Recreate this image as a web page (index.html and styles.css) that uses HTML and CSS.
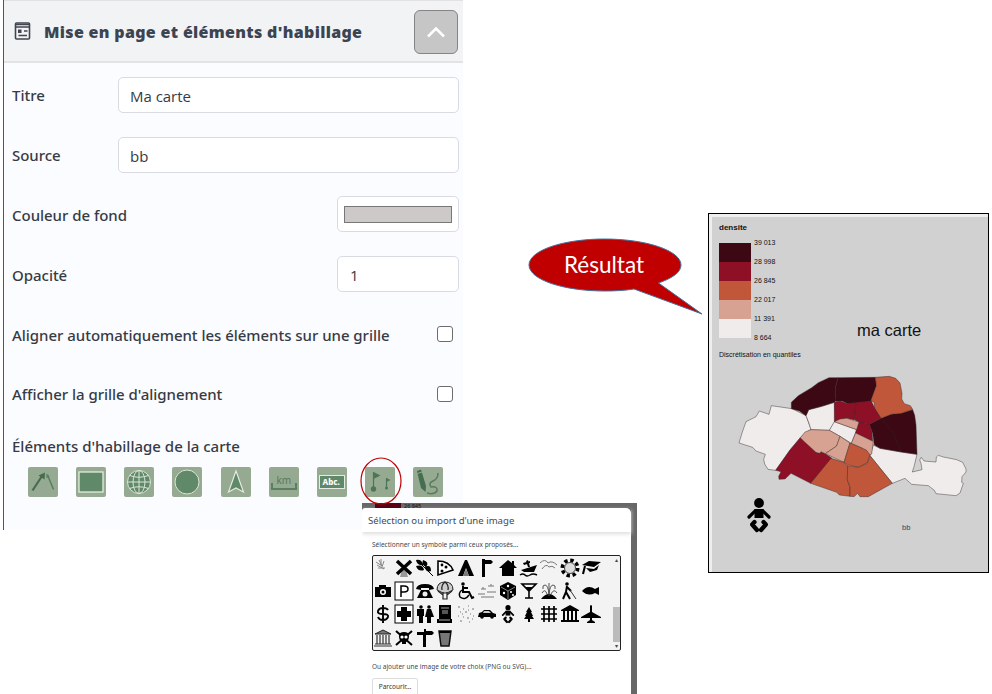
FILE: index.html
```html
<!DOCTYPE html>
<html lang="fr">
<head>
<meta charset="utf-8">
<title>Mise en page et éléments d'habillage</title>
<link rel="stylesheet" href="styles.css">
</head>
<body>
<main class="stage">
  <section class="panel">
    <header class="panel-head">
      <svg class="head-icon" viewBox="0 0 16 18"><rect x="1" y="1" width="14" height="16" rx="1" fill="none" stroke="#41454f" stroke-width="1.6"/><path d="M1 2.5H15M1 5H15M9.5 9H13M4 13.5H12.5" stroke="#41454f" stroke-width="1.5"/><rect x="3.5" y="7.5" width="3.5" height="3.5" fill="#41454f"/></svg>
      <h1>Mise en page et éléments d'habillage</h1>
      <button class="toggle" aria-label="Replier"><svg viewBox="0 0 20 12"><path d="M2 10.500L10 2.500L18 10.500" fill="none" stroke="#fff" stroke-width="2.600"/></svg></button>
    </header>
    <div class="fields">
      <label class="row"><span>Titre</span><span class="box wide">Ma carte</span></label>
      <label class="row"><span>Source</span><span class="box wide">bb</span></label>
      <label class="row"><span>Couleur de fond</span><span class="box color"><i></i></span></label>
      <label class="row"><span>Opacité</span><span class="box">1</span></label>
      <label class="row"><span>Aligner automatiquement les éléments sur une grille</span><span class="check"></span></label>
      <label class="row"><span>Afficher la grille d'alignement</span><span class="check"></span></label>
    </div>
    <h2>Éléments d'habillage de la carte</h2>
    <div class="tools">
      <svg viewBox="0 0 30 30"><path d="M4.500 23.500L14 9" stroke="#466b51" stroke-width="2.200"/><path d="M17 5.500L16.500 12.500L10.500 8.500Z" fill="#466b51"/><path d="M19.500 8L25.500 22.500" stroke="#587c60" stroke-width="1.500"/><path d="M18.500 6.500L21.500 9.500L18.500 11Z" fill="#587c60"/></svg>
      <svg viewBox="0 0 30 30"><rect x="3" y="5" width="24" height="20" fill="#5f8968" stroke="#e4ebe1" stroke-width="1.300"/></svg>
      <svg viewBox="0 0 30 30"><circle cx="15" cy="15" r="11.500" fill="#5f8968"/><g fill="none" stroke="#dbe5d8" stroke-width="1"><circle cx="15" cy="15" r="11.500"/><ellipse cx="15" cy="15" rx="6" ry="11.500"/><path d="M15 3.500V26.500M3.500 15H26.500M5.500 8.500Q15 12 24.500 8.500M5.500 21.500Q15 18 24.500 21.500"/></g></svg>
      <svg viewBox="0 0 30 30"><circle cx="15" cy="15" r="12" fill="#5f8968" stroke="#dbe5d8"/></svg>
      <svg viewBox="0 0 30 30"><path d="M15 4L22.500 25L15 21L7.500 25Z" fill="#5f8968" stroke="#e4ebe1" stroke-width="1.200"/></svg>
      <svg viewBox="0 0 30 30"><text x="7.500" y="17" class="km">km</text><path d="M3 16V22H27V16" fill="none" stroke="#5a8064" stroke-width="2"/></svg>
      <svg viewBox="0 0 30 30"><rect x="2.500" y="8.500" width="25" height="13" fill="#5f8968" stroke="#e4ebe1"/><text x="5.500" y="18" class="abc">Abc.</text></svg>
      <svg viewBox="0 0 30 30"><path d="M8.500 22V5M21.500 20V11" stroke="#4d7558" stroke-width="1.200"/><path d="M8.500 5L15.500 8.500L8.500 12ZM21.500 11L25.500 13L21.500 15Z" fill="#4d7558"/><circle cx="8.500" cy="22" r="2.700" fill="#4d7558"/><circle cx="21.500" cy="21" r="1.500" fill="#4d7558"/></svg>
      <svg viewBox="0 0 30 30"><path d="M4 4L8 2.500L13 19L12.500 25L8 21Z" fill="#456d51"/><path d="M4.500 6.500L9 5" stroke="#96aa91"/><path d="M25 6Q25 12 20 14T18 20Q25 19 24 24Q21 28 14 26" fill="none" stroke="#587c60" stroke-width="1.500"/></svg>
    </div>
  </section>

  <svg class="callout" viewBox="528 236 176 80"><path d="M634 289C625 290.500 615 291 604.500 291C563 291 529 279.500 529 265C529 250.500 563 239 604.500 239C646 239 681 250.500 681 265C681 272 673 278 658.500 283L702 314Z" fill="#c00000" stroke="#41719c" stroke-width="1"/><text x="564" y="273" textLength="80" lengthAdjust="spacingAndGlyphs">Résultat</text></svg>

  <section class="result">
    <div class="map-page">
      <h3>densite</h3>
      <div class="legend">
        <div class="ramp"><i class="c1"></i><i class="c2"></i><i class="c3"></i><i class="c4"></i><i class="c5"></i></div>
        <div class="values"><span>39 013</span><span>28 998</span><span>26 845</span><span>22 017</span><span>11 391</span><span>8 664</span></div>
      </div>
      <p class="method">Discrétisation en quantiles</p>
      <p class="map-title">ma carte</p>
      <svg class="map" viewBox="0 0 750 420">
        <g stroke="#302428" stroke-opacity=".65" stroke-width="2" stroke-linejoin="round">
          <g fill="#f0eceb">
            <path d="M27 234L36 204L48 170L78 155L88 138L117 148L124 122L186 131L228 152L243 193L225 205L211 218L180 255L137 316L114 313L104 297L101 283L106 268L78 258L68 247Z"/>
            <path d="M228 152L236 134L275 124L313 112L316 168L298 196L243 194L236 172Z"/>
            <path d="M313 170L380 194L364 235L330 214L298 196Z"/>
            <path d="M430 240L450 250L514 261L561 268L552 305L547 321L576 314L573 295L569 285L574 277L582 288L618 291L619 276L625 271L640 276L680 284L698 292L708 312L708 321L696 335L695 352L700 355L690 384L678 392L618 386L613 376L595 362L545 358L525 340L487 355L420 272Z"/>
          </g>
          <g fill="#3b0813">
            <path d="M184 131L184 112L205 92L245 68L265 53L297 38L324 38L316 68L318 107L313 112L275 124L236 134L228 152L208 138Z"/>
            <path d="M324 38L436 37L439 62L424 108L378 116L354 116L336 108L318 109L316 70Z"/>
            <path d="M453 160L484 148L514 145L548 134L554 151L558 180L561 268L514 261L450 250L433 240L428 205L418 178Z"/>
            <path d="M455 160L490 205L514 261" fill="none"/>
          </g>
          <path fill="#c0573a" d="M436 37L478 34L497 40L510 54L516 85L515 102L523 116L541 122L548 133L514 145L484 148L453 160L434 134L432 111L422 107L428 91L439 62Z"/>
          <g fill="#8d1027">
            <path d="M313 112L330 108L354 116L378 112L377 138L372 164L350 160L313 170Z"/>
            <path d="M378 112L424 108L434 130L453 160L418 178L386 172L372 163Z"/>
            <path d="M387 171L418 178L426 200L428 228L400 215L377 204L380 190Z"/>
            <path d="M211 218L225 232L258 262L268 265L273 260L286 266L306 280L300 290L242 355L183 325L165 342L147 343L146 334L153 320L137 316L180 255Z"/>
          </g>
          <g fill="#d8a292">
            <path d="M313 170L330 162L350 160L387 171L380 194Z"/>
            <path d="M377 204L400 215L430 230L425 267L418 271L398 250L364 235Z"/>
            <path d="M211 218L225 201L243 194L298 196L330 214L320 243L286 266L273 260L268 265L258 262L225 232Z"/>
            <path d="M330 214L360 234L342 292L286 266L320 243Z"/>
          </g>
          <g fill="#c0573a">
            <path d="M360 234L388 246L409 255L420 270L412 293L385 307L355 300L342 292Z"/>
            <path d="M303 280L342 292L353 302L352 345L360 366L360 394L328 390L320 382L242 355Z"/>
            <path d="M353 302L385 307L412 295L420 272L487 355L415 395L390 395L383 385L372 395L360 394L360 366L352 345Z"/>
          </g>
        </g>
      </svg>
      <div class="map-foot">
        <svg class="baby" viewBox="0 0 24 34"><use href="#baby-shape"/></svg>
        <span>bb</span>
      </div>
    </div>
  </section>
</main>

<svg class="ring" viewBox="0 0 42 48"><ellipse cx="21" cy="24" rx="20" ry="23" fill="none" stroke="#c00000" stroke-width="1.200"/></svg>

<section class="backdrop">
  <div class="behind"><i></i><span>26 845</span></div>
  <div class="dialog">
    <h2>Sélection ou import d'une image</h2>
    <div class="dialog-body">
      <p>Sélectionner un symbole parmi ceux proposés...</p>
      <div class="picker">
        <div class="symbols">
          <svg viewBox="0 0 18 18"><path d="M5 1L8 7M7 0V6M10 2L8 8M2 3L8 7M4 9H11M3 6L10 10" stroke="#888"/></svg>
          <svg viewBox="0 0 18 18"><path d="M7 11L5 18H13L11 11Z" fill="#999"/><path d="M2 2L16 15M16 2L2 15" stroke="#000" stroke-width="3.500"/></svg>
          <svg viewBox="0 0 18 18"><path d="M0 1Q6 0 7 6Q1 7 0 1M7 1Q14 3 10 8Q5 6 7 1M0 7Q7 5 8 11Q2 13 0 7M9 8Q15 5 15 12Q10 14 9 8"/><path d="M5 5L17 17" stroke="#000"/></svg>
          <svg viewBox="0 0 18 18"><path d="M2 2Q13 2 17 11L2 16Z" fill="#fff" stroke="#000" stroke-width="1.600"/><circle cx="6" cy="6" r="1.400"/><circle cx="10" cy="8" r="1.500"/><circle cx="6" cy="12" r="1.500"/></svg>
          <svg viewBox="0 0 18 18"><path d="M8 1H10L17 17H12L9 9L6 17H1Z"/><path d="M9 10L12 17H6Z" fill="#777"/></svg>
          <svg viewBox="0 0 18 18"><path d="M4 0H7V1H13L15 3L13 5H7V18H4Z"/></svg>
          <svg viewBox="0 0 18 18"><path d="M9 1L13 4V2H15V6L18 9H15V17H3V9H0Z"/></svg>
          <svg viewBox="0 0 18 18"><path d="M1 11L17 6L14 13H4ZM6 2L8 1L10 8H8ZM3 4L10 2V4L4 6Z"/><path d="M0 16Q3 14 5 16T10 16T17 16" fill="none" stroke="#000" stroke-width="1.500"/></svg>
          <svg viewBox="0 0 18 18" fill="none" stroke="#777"><path d="M0 4Q5 -1 8 4Q12 1 17 6M2 10Q6 4 9 8Q12 6 15 9"/></svg>
          <svg viewBox="0 0 18 18"><circle cx="9" cy="9" r="7.700" fill="none" stroke="#000" stroke-width="3.600" stroke-dasharray="3.400 2.648"/><circle cx="9" cy="9" r="5.500" fill="#ddd" stroke="#444"/></svg>
          <svg viewBox="0 0 18 18"><path d="M0 6L7 2L19 3L12 8ZM4 9L12 10L17 6L15 11L8 13Z"/><path d="M3 7L1 15" stroke="#000" stroke-width="2"/></svg>

          <svg viewBox="0 0 18 18"><path d="M1 5H5V3H12V5H17V15H1Z"/><circle cx="9" cy="10" r="3" fill="#fff"/><circle cx="9" cy="10" r="1.500"/></svg>
          <svg viewBox="0 0 18 18"><rect x="0" y="0" width="18" height="18" fill="#fff" stroke="#000"/><path d="M6 15V4H9Q13 4 13 7T9 10H6" fill="none" stroke="#000" stroke-width="1.500"/></svg>
          <svg viewBox="0 0 18 18"><path d="M0 7Q1 2 9 2T18 7L13 8V6H5V8ZM5 8H13L17 16H1Z"/><circle cx="9" cy="12" r="2.500" fill="#eee"/></svg>
          <svg viewBox="0 0 18 18"><path d="M1 8Q1 0 9 0T17 8L11 11H7Z" fill="#ccc" stroke="#222"/><path d="M6 8Q5 3 9 0Q13 3 12 8M7 10V17H11V10M2 9L7 13M16 9L11 13" fill="none" stroke="#222" stroke-width="1.200"/></svg>
          <svg viewBox="0 0 18 18"><circle cx="6" cy="2" r="1.800"/><path d="M6 4V10H12L15 16L17 15M6 6H11" fill="none" stroke="#000" stroke-width="2"/><path d="M5 8Q1 11 3 15Q8 19 12 13" fill="none" stroke="#000" stroke-width="1.500"/></svg>
          <svg viewBox="0 0 18 18" stroke="#777"><path d="M3 7H8M10 4H16M0 12H7M9 10H18M3 15H16M5 5V7M13 2V4"/></svg>
          <svg viewBox="0 0 18 18"><path d="M9 0L17 4V13L9 18L1 13V4Z"/><path d="M2 5L9 9L16 5M9 9V17" fill="none" stroke="#bbb" stroke-width=".7"/><g fill="#fff"><circle cx="9" cy="4" r="1.200"/><circle cx="5" cy="11" r="1.200"/><circle cx="12" cy="10" r="1"/><circle cx="14" cy="13" r="1"/></g></svg>
          <svg viewBox="0 0 18 18"><path d="M2 2H16L9 9ZM9 9V16M5 16H13" fill="none" stroke="#000" stroke-width="1.600"/><path d="M5 5H13L9 9Z"/></svg>
          <svg viewBox="0 0 18 18"><path d="M1 17Q5 12 9 12T17 17Z"/><path d="M9 14V1M9 12Q8 3 5 3T3 7M9 12Q10 3 13 3T15 7M7 12Q5 6 2 11M11 12Q14 6 17 11" fill="none" stroke="#555"/></svg>
          <svg viewBox="0 0 18 18"><circle cx="6" cy="2" r="1.800"/><path d="M6 4L5 10L2 17M5 10L9 17M6 5L10 9" fill="none" stroke="#000" stroke-width="2"/><path d="M9 8L15 17" stroke="#333"/></svg>
          <svg viewBox="0 0 18 18"><path d="M0 9Q6 2 13 7L17 5V13L13 11Q6 15 0 9"/></svg>

          <svg viewBox="0 0 18 18"><path d="M14 5Q13 3 9 3T4 6T9 9T14 12T9 15T4 12M9 0V18" fill="none" stroke="#000" stroke-width="1.900"/></svg>
          <svg viewBox="0 0 18 18"><rect x="0" y="0" width="18" height="18" fill="#fff" stroke="#000"/><path d="M6 2H12V6H16V12H12V16H6V12H2V6H6Z"/></svg>
          <svg viewBox="0 0 18 18"><circle cx="5" cy="2" r="1.800"/><circle cx="13" cy="2" r="1.800"/><path d="M1 4H8V11H7V18H3V11H1ZM11 4H15L18 12H15V18H11V12H9Z"/></svg>
          <svg viewBox="0 0 18 18"><path d="M3 0H15V14H16V18H1V14H3Z"/><path d="M5 3H13M6 6H12M6 8H12M3 15H14" stroke="#aaa"/></svg>
          <svg viewBox="0 0 18 18"><path d="M1 2h2M6 4h1M11 1h1M15 4h2M3 7h1M8 7h2M13 9h1M1 11h1M6 12h1M10 13h2M15 14h1M3 16h2M12 17h1M5 9h1M11 5h1M16 11h1" stroke="#777"/></svg>
          <svg viewBox="0 0 18 18"><path d="M1 8L4 7L6 5H12L15 8L18 9V12H0Z"/><path d="M6 6H11L13 8H5Z" fill="#ccc"/><circle cx="4" cy="12" r="1.800"/><circle cx="14" cy="12" r="1.800"/></svg>
          <svg viewBox="0 0 24 34"><g id="baby-shape"><circle cx="12" cy="5" r="4.900"/><path d="M2 19L8.500 12.500H15.500L22 19" fill="none" stroke="#000" stroke-width="3.200" stroke-linecap="round"/><path d="M7.500 11H16.500V20H7.500Z"/><path d="M7.500 24L5.200 26.500L10 32M16.500 24L18.800 26.500L14 32" fill="none" stroke="#000" stroke-width="4.300" stroke-linecap="round" stroke-linejoin="round"/></g></svg>
          <svg viewBox="0 0 18 18"><path d="M9 2L12 7H11L13 11H12L14 14H10V17H8V14H4L6 11H5L7 7H6Z"/></svg>
          <svg viewBox="0 0 18 18"><path d="M4 1V17M9 1V17M14 1V17M1 4H17M1 9H17M1 14H17" stroke="#000" stroke-width="1.700"/></svg>
          <svg viewBox="0 0 18 18"><path d="M9 0L18 5V6H0V5ZM0 15H18V17H0Z"/><path d="M3 6V15M7 6V15M11 6V15M15 6V15" stroke="#000" stroke-width="2"/></svg>
          <svg viewBox="0 0 18 18"><path d="M8 1Q9-1 10 1V7L19 12V13H10V15L13 17V18H5V17L8 15V13H-1V12L8 7Z"/></svg>

          <svg viewBox="0 0 18 18"><path d="M9 1L17 5H1Z" fill="#777" stroke="#222"/><path d="M3 6V15M6 6V15M9 6V15M12 6V15M15 6V15M1 15H17M0 17H18" stroke="#333" stroke-width="1.200"/></svg>
          <svg viewBox="0 0 18 18"><path d="M1 2L17 16M17 2L1 16" stroke="#000" stroke-width="2"/><path d="M4 7Q4 3 9 3T14 7Q14 12 11 13V15H7V13Q4 12 4 7"/><circle cx="7" cy="8" r="1.600" fill="#fff"/><circle cx="11" cy="8" r="1.600" fill="#fff"/></svg>
          <svg viewBox="0 0 18 18"><path d="M8 0H10V2H16L18 4L16 6H10V18H7V6H1V3H8Z"/></svg>
          <svg viewBox="0 0 18 18"><path d="M3 2H15L13 17H5Z" fill="#777" stroke="#111" stroke-width="1.500"/><path d="M3 3H15" stroke="#000" stroke-width="2"/></svg>
        </div>
        <div class="scroll"><b>▴</b><i></i><b>▾</b></div>
      </div>
      <p>Ou ajouter une image de votre choix (PNG ou SVG)...</p>
      <button class="browse">Parcourir...</button>
    </div>
  </div>
</section>
</body>
</html>
```
FILE: styles.css
```css
* { box-sizing: border-box; }
body { margin: 0; width: 992px; height: 694px; overflow: hidden; background: #fff; font-family: "Noto Sans", sans-serif; position: relative; }
h1, h2, h3, p { margin: 0; }
svg { display: block; overflow: visible; }
.stage { display: flex; align-items: flex-start; padding-left: 3px; }

.panel { width: 460px; height: 530px; flex: none; border-left: 1px solid #555; background: #fbfcff; color: #363b44; }
.panel-head { display: flex; align-items: center; height: 63px; padding: 1px 5px 0 10px; background: #f2f3f4; border-top: 1px solid #e2e2e3; border-bottom: 2px solid #e3e3e4; }
.head-icon { width: 17px; height: 18px; margin-top: -2px; }
.panel-head h1 { margin-left: 13px; font-size: 16px; font-weight: 900; letter-spacing: .32px; color: #3c4452; white-space: nowrap; }
.toggle { display: grid; place-items: center; width: 44px; height: 44px; margin-left: auto; padding: 0; border: 1px solid #858585; border-radius: 6px; background: #c6c6c6; }
.toggle svg { width: 20px; height: 12px; }
.fields { padding: 2px 4px 0 8px; }
.row { display: flex; align-items: center; justify-content: space-between; height: 59.8px; font-size: 15px; font-weight: 500; letter-spacing: -.03px; white-space: nowrap; }
.row > span:first-child { padding-top: 1px; }
.box { width: 122px; height: 36px; padding: 1px 12px 0; border: 1px solid #d9dbe3; border-radius: 5px; background: #fff; line-height: 35px; font-family: "Open Sans", sans-serif; font-weight: 400; }
.wide { width: 341px; padding-left: 11px; }
.color { padding: 9px 6px; }
.color i { display: block; height: 17px; border: 1px solid #777; background: #cec9c9; }
.check { width: 16px; height: 16px; margin-right: 6px; border: 1.5px solid #6d6d70; border-radius: 3px; background: #fff; }
.panel h2 { margin: 10px 0 0 8px; font-size: 15px; line-height: 24px; font-weight: 500; }
.tools { display: flex; justify-content: space-between; margin: 9px 20px 0 24px; }
.tools svg { width: 30px; height: 30px; background: #96aa91; border-radius: 2px; }
.km { font: 10px "Noto Sans", sans-serif; fill: #55795f; }
.abc { font: 800 8px "Noto Sans", sans-serif; fill: #fff; }

.callout { flex: none; width: 176px; height: 80px; margin: 236px 0 0 65px; }
.callout text { font: 24px Lato, sans-serif; fill: #fff; }
.result { flex: none; width: 281px; height: 360px; margin: 213px 0 0 4px; padding: 3px 0 0 3px; border: 1px solid #000; background: #eee; font-family: "Liberation Sans", sans-serif; color: #111; }
.map-page { height: 355px; padding: 5px 0 0 7px; background: #d1d1d1; overflow: hidden; }
.map-page h3 { font-size: 8px; line-height: 11px; }
.legend { display: flex; height: 107px; margin-top: 4px; }
.ramp { width: 32px; padding-top: 6px; }
.ramp i { display: block; height: 19.1px; }
.c1 { background: #3b0813; } .c2 { background: #8d1027; } .c3 { background: #c0573a; } .c4 { background: #d8a292; } .c5 { background: #f0eceb; }
.values { margin-left: 3px; font-size: 7px; line-height: 19.1px; margin-top: -4px; white-space: nowrap; }
.values span { display: block; }
.method { margin-top: 7px; font-size: 7px; line-height: 8px; }
.map-title { margin: -40px 0 0 138px; font-size: 16.5px; line-height: 22px; }
.map { width: 250px; height: 140px; margin: 24px 0 0 11px; }
.map-foot { display: flex; align-items: flex-start; margin: -7px 0 0 28px; }
.baby { width: 24px; height: 34px; }
.map-foot span { margin: 25px 0 0 131px; font-size: 7.5px; color: #174b68; }

.ring { position: absolute; left: 360px; top: 457px; width: 42px; height: 48px; z-index: 3; }
.backdrop { position: absolute; left: 362px; top: 503px; width: 275px; height: 191px; overflow: hidden; background: #676767; color: #454950; }
.behind { display: flex; height: 5px; padding-left: 13px; font-size: 5.5px; line-height: 6px; color: #111; }
.behind i { width: 26px; background: #550315; margin-right: 3px; }
.dialog { width: 269px; height: 186px; background: #fff; border-radius: 3px 5px 0 0; }
.dialog h2 { height: 24px; padding-left: 6px; font-size: 9.6px; line-height: 25px; font-weight: 400; box-shadow: 0 2px 4px #ddd; }
.dialog-body { padding: 8px 10px 0; }
.dialog-body p { font-size: 6.5px; line-height: 10px; white-space: nowrap; }
.picker { display: flex; justify-content: space-between; height: 96px; margin: 5px 0 11px; border: 1.5px solid #222; border-radius: 2px; background: #f3f3f3; }
.symbols { display: grid; grid-template-columns: repeat(11, 18px); grid-auto-rows: 18px; gap: 5.2px 2.8px; padding: 3px 1px; }
.symbols svg { width: 18px; height: 18px; }
.scroll { display: flex; flex-direction: column; align-items: center; width: 8px; font-size: 6px; line-height: 8px; }
.scroll i { width: 7px; height: 35px; margin-top: auto; background: #bbb; }
.scroll b { font-weight: 400; height: 8px; }
.browse { display: block; width: 46px; height: 20px; padding: 0 0 3px; margin-top: 6px; border: 1px solid #ddd; border-radius: 2px; background: #fff; font: 6.5px "Noto Sans", sans-serif; color: #333; }
```
